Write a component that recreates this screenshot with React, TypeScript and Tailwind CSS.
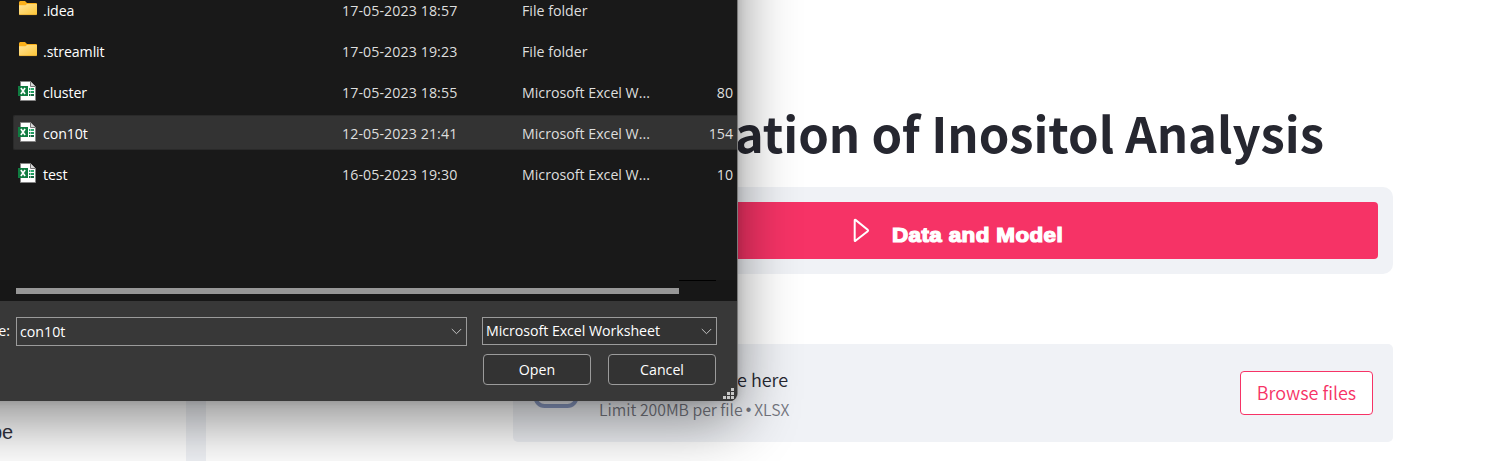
import React from "react";

type FileEntry = {
  name: string;
  kind: "folder" | "excel";
  modified: string;
  type: string;
  size?: string;
  selected?: boolean;
};

const files: FileEntry[] = [
  { name: ".idea", kind: "folder", modified: "17-05-2023 18:57", type: "File folder" },
  { name: ".streamlit", kind: "folder", modified: "17-05-2023 19:23", type: "File folder" },
  { name: "cluster", kind: "excel", modified: "17-05-2023 18:55", type: "Microsoft Excel W...", size: "80" },
  { name: "con10t", kind: "excel", modified: "12-05-2023 21:41", type: "Microsoft Excel W...", size: "154", selected: true },
  { name: "test", kind: "excel", modified: "16-05-2023 19:30", type: "Microsoft Excel W...", size: "10" },
];

function FolderIcon() {
  return (
    <svg width="20" height="20" viewBox="0 0 20 20" className="block">
      <defs>
        <linearGradient id="folder" x1="0" y1="0" x2="1" y2="1">
          <stop offset="0" stopColor="#ffe49a" />
          <stop offset="1" stopColor="#fdc535" />
        </linearGradient>
      </defs>
      <path d="M1 2.5Q1 1 2.3 1H7l2 2h9q1 0 1 1v4H1z" fill="#fbb01a" />
      <path d="M1 5.3h6.5L9 4h10v10q0 1-1 1H2q-1 0-1-1z" fill="url(#folder)" />
      <path d="M1.5 14.6h17" stroke="#e9b037" strokeWidth="0.8" />
    </svg>
  );
}

function ExcelIcon() {
  return (
    <svg width="20" height="20" viewBox="0 0 20 20" className="block">
      <path d="M2.5.5h10l5 5v14h-15z" fill="#fff" stroke="#858585" />
      <path d="M12.5.5v5h5" fill="#d8d8d8" stroke="#777" />
      <path d="M11 7h1.5v2H11zM13 7h3v2h-3z" fill="#30a86f" />
      <path d="M11 10h1.5v2H11zM13 10h3v2h-3z" fill="#209a60" />
      <path d="M11 13h1.5v2H11zM13 13h3v2h-3z" fill="#176b43" />
      <path d="M0 5h10v10H0z" fill="#107c41" />
      <path d="M2.9 7l4.2 6M7.1 7l-4.2 6" stroke="#fff" strokeWidth="1.6" />
    </svg>
  );
}

function Chevron() {
  return (
    <svg width="11" height="7" viewBox="0 0 11 7" fill="none" className="block">
      <path d="M.8 1l4.7 4.7L10.2 1" stroke="#c4c4c4" strokeWidth="1" />
    </svg>
  );
}

function FileRow({ file }: { file: FileEntry }) {
  return (
    <div className="h-[41px] pt-[2px] pl-[13px]">
      <div
        className={
          file.selected
            ? "flex h-[35px] items-center rounded-l-[2px] border-y border-l border-[#2a2a2a] bg-[#333333]"
            : "flex h-[35px] items-center border-y border-l border-transparent"
        }
      >
        <div className={file.kind === "folder" ? "ml-[4px] w-[25px] pt-[1px]" : "ml-[4px] w-[25px] pb-[1px]"}>
          {file.kind === "folder" ? <FolderIcon /> : <ExcelIcon />}
        </div>
        <div className="w-[299px] pt-[2px] tracking-[-0.1px] text-white">{file.name}</div>
        <div className="w-[180px] pt-[2px] tracking-[0.09px]">{file.modified}</div>
        <div className="w-[150px] pt-[2px]">{file.type}</div>
        <div className="flex-1 pt-[2px] pr-[4px] text-right">{file.size}</div>
      </div>
    </div>
  );
}

function ResizeGrip() {
  return (
    <svg width="11" height="11" viewBox="0 0 11 11" className="absolute right-[3px] bottom-[2px]" fill="#c8c8c8">
      <path d="M8 0h3v3H8zM4 4h3v3H4zM8 4h3v3H8zM0 8h3v3H0zM4 8h3v3H4zM8 8h3v3H8z" />
    </svg>
  );
}

function OpenDialog() {
  return (
    <div className="absolute -top-[300px] -left-[300px] h-[701px] w-[1038px] overflow-visible rounded-br-[8px] pt-[300px] pl-[300px] shadow-[0_20px_60px_rgba(0,0,0,0.46),0_0_8px_rgba(0,0,0,0.15)]">
      <div className="relative flex h-[401px] w-[738px] flex-col overflow-hidden rounded-br-[8px] border-r border-[#7a7a7a] bg-[#191919] font-['Open_Sans',sans-serif] text-[14.2px] leading-[20px] whitespace-nowrap text-[#dedede]">
        <div className="-mt-[10px] h-[290px]">
          {files.map((file) => (
            <FileRow key={file.name} file={file} />
          ))}
        </div>
        <div className="h-[21px] bg-[#171717] pl-[16px]">
          <div className="ml-[663px] h-px w-[37px] bg-black" />
          <div className="mt-[7px] h-[6px] w-[663px] bg-[#969696]" />
        </div>
        <div className="h-[100px] bg-[#383838] pt-[16px] text-white">
          <div className="flex">
            <div className="flex w-[16px] justify-end pt-[4px] pr-[6px]">e:</div>
            <div className="flex h-[29px] w-[451px] items-center justify-between border border-[#9b9b9b] pr-[4px] pl-[3px]">
              <span>con10t</span>
              <Chevron />
            </div>
            <div className="ml-[15px] flex h-[28px] w-[235px] items-center justify-between border border-[#9b9b9b] bg-[#333333] pr-[4px] pl-[3px]">
              <span className="tracking-[-0.04px]">Microsoft Excel Worksheet</span>
              <Chevron />
            </div>
          </div>
          <div className="mt-[8px] ml-[483px] flex gap-[17px]">
            <button className="h-[31px] w-[108px] rounded-[4px] border border-[#9b9b9b] bg-[#333333]">Open</button>
            <button className="h-[31px] w-[108px] rounded-[4px] border border-[#9b9b9b] bg-[#333333]">Cancel</button>
          </div>
        </div>
        <ResizeGrip />
      </div>
    </div>
  );
}

function Uploader() {
  return (
    <section className="mt-[70px] flex h-[98px] w-[880px] items-center rounded-[5px] bg-[#f0f2f6] pr-[20px] pl-[20px]">
      <svg width="46" height="46" viewBox="0 0 46 46" fill="none" className="mt-[-6px] block">
        <path d="M2.5 25v5a9 9 0 0 0 9 9h23a9 9 0 0 0 9-9v-5" stroke="#8b9bc4" strokeWidth="4" />
      </svg>
      <div className="ml-[20px] flex-1 pt-[4px] font-['Noto_Sans_CJK_SC',sans-serif] whitespace-nowrap">
        <div className="ml-[138px] text-[18px] leading-[30px] font-[350] text-[#262730]">e here</div>
        <div className="flex text-[15.8px] leading-[32px] font-[350] text-[#74767f]">
          <span>Limit 200MB per file</span>
          <span className="mx-[3px] font-['Liberation_Sans',sans-serif]">•</span>
          <span>XLSX</span>
        </div>
      </div>
      <button className="h-[44px] w-[133px] rounded-[4px] border border-[#f63366] bg-white pb-[2px] font-['Noto_Sans_CJK_SC',sans-serif] text-[18px] font-[350] text-[#f63366]">
        Browse files
      </button>
    </section>
  );
}

export default function App() {
  return (
    <div className="relative flex h-[461px] w-[1488px] overflow-hidden bg-white">
      <aside className="w-[186px] bg-white pt-[420px]">
        <div className="-ml-[9px] font-['Liberation_Sans',sans-serif] text-[20px] leading-[24px] text-[#31333f]">pe</div>
      </aside>
      <div className="w-[20px] bg-[#f0f2f6]" />
      <main className="flex flex-1 flex-col pl-[307px]">
        <h1 className="mt-[96px] h-[91px] w-[811px] text-right font-['Noto_Sans_CJK_SC',sans-serif] text-[49px] leading-[72px] font-bold whitespace-nowrap text-[#262730]">
          ation of Inositol Analysis
        </h1>
        <nav className="h-[87px] w-[880px] rounded-[10px] bg-[#f0f2f6] p-[15px]">
          <div className="flex h-[57px] items-center rounded-[4px] bg-[#f63366] pl-[325px] text-white">
            <svg width="17" height="25" viewBox="0 0 17 25" fill="none" className="block">
              <path d="M1.7 2.5v20q0 1 .8.2l12.2-9.4q.8-.8 0-1.6L2.5 1.9q-.8-.5-.8.6z" stroke="#fff" strokeWidth="2" />
            </svg>
            <span className="mt-[8px] ml-[22px] origin-left scale-x-[1.12] font-['Liberation_Sans',sans-serif] text-[20px] font-bold tracking-[0.35px] whitespace-nowrap [-webkit-text-stroke:1.2px_white]">
              Data and Model
            </span>
          </div>
        </nav>
        <Uploader />
      </main>
      <OpenDialog />
    </div>
  );
}
